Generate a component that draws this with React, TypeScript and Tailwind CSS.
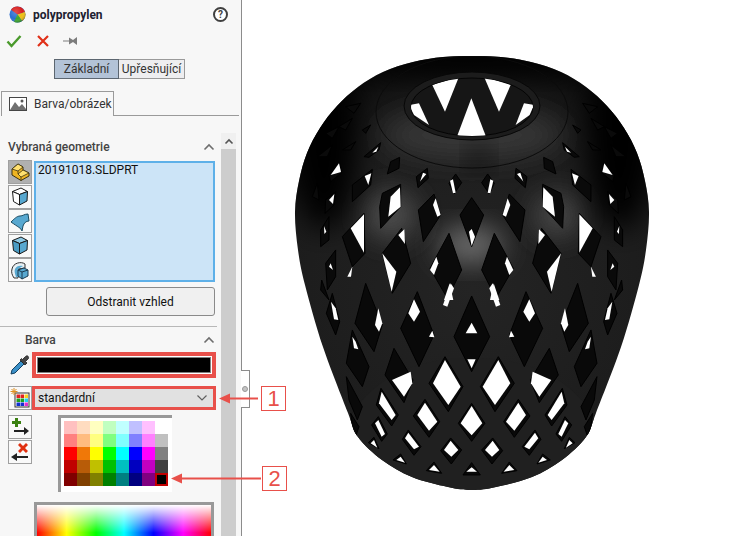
import React from "react";

const FONT = "font-['Roboto','Noto_Sans',sans-serif]";

const PALETTE = [
  ["#ffc0c0", "#ffdcc0", "#ffffc0", "#c0ffc0", "#c0ffff", "#c0c0ff", "#ffc0ff", "#ffffff"],
  ["#ff8080", "#ffbc80", "#ffff80", "#80ff80", "#80ffff", "#8080ff", "#ff80ff", "#c0c0c0"],
  ["#ff0000", "#f07808", "#ffff00", "#00ff00", "#00ffff", "#0000ff", "#ff00ff", "#808080"],
  ["#c00000", "#b85c08", "#c0c000", "#00c000", "#00c0c0", "#0000c0", "#c000c0", "#404040"],
  ["#800000", "#804000", "#808000", "#008000", "#008080", "#000080", "#800080", "#000000"],
];

function Chevron({ className = "" }: { className?: string }) {
  return (
    <svg width="12" height="8" viewBox="0 0 12 8" className={className}>
      <path d="M1.5 6.5 L6 2 L10.5 6.5" fill="none" stroke="#6e6e6e" strokeWidth="1.6" />
    </svg>
  );
}

function Ball() {
  return (
    <svg width="17" height="17" viewBox="0 0 17 17">
      <defs>
        <radialGradient id="ballShade" cx="0.4" cy="0.35" r="0.7">
          <stop offset="0" stopColor="#fff" stopOpacity="0.22" />
          <stop offset="0.6" stopColor="#fff" stopOpacity="0" />
          <stop offset="1" stopColor="#000" stopOpacity="0.35" />
        </radialGradient>
      </defs>
      <circle cx="8.5" cy="8.5" r="8" fill="#2a6fd0" />
      <path d="M8.5 8.5 L2 3.8 A8 8 0 0 1 16 6 Z" fill="#d81e1c" />
      <path d="M8.5 8.5 L16 6 A8 8 0 0 1 13 15 Z" fill="#f0c010" />
      <path d="M8.5 8.5 L13 15 A8 8 0 0 1 5 15.7 Z" fill="#3aa82c" />
      <circle cx="8.5" cy="8.5" r="8" fill="url(#ballShade)" />
    </svg>
  );
}

function SmallIconBtn({ selected, children }: { selected?: boolean; children: React.ReactNode }) {
  return (
    <div
      className={`w-[24px] h-[24px] border border-[#a0a0a0] flex items-center justify-center ${
        selected ? "bg-[#b0b0b0] border-[#808080]" : "bg-[#f9f9f9]"
      }`}
    >
      {children}
    </div>
  );
}

function CubeIcon({ top, left, right }: { top: string; left: string; right: string }) {
  return (
    <svg width="18" height="21" viewBox="0 0 18 20">
      <path d="M1.5 5 L10 1.5 L16.5 5 L8.5 8 Z" fill={top} stroke="#1a1a1a" strokeWidth="1" />
      <path d="M1.5 5 L8.5 8 L8.5 18.5 L2.5 15 Z" fill={left} stroke="#1a1a1a" strokeWidth="1" />
      <path d="M8.5 8 L16.5 5 L16 14.5 L8.5 18.5 Z" fill={right} stroke="#1a1a1a" strokeWidth="1" />
    </svg>
  );
}

/* Right half of the vase silhouette in page coordinates, mirrored about x=473 */
const RIGHT: [number, number][] = [
  [473, 56], [502, 57], [532, 62], [562, 72], [587, 87], [608, 106], [625, 128], [638, 153], [646, 181], [650, 212], [647, 250],
  [640, 285], [622, 347], [597, 413], [587, 437], [563, 460], [533, 477], [497, 487], [473, 490],
];
const ALL: [number, number][] = [...RIGHT, ...RIGHT.slice(0, -1).reverse().map(([x, y]) => [946 - x, y] as [number, number])];
function smooth(pts: [number, number][]) {
  const n = pts.length - 1; // closed: first === last
  let d = `M${pts[0][0]} ${pts[0][1]}`;
  for (let i = 0; i < n; i++) {
    const p0 = pts[(i - 1 + n) % n];
    const p1 = pts[i];
    const p2 = pts[i + 1];
    const p3 = pts[(i + 2) % n];
    const c1x = p1[0] + (p2[0] - p0[0]) / 6;
    const c1y = p1[1] + (p2[1] - p0[1]) / 6;
    const c2x = p2[0] - (p3[0] - p1[0]) / 6;
    const c2y = p2[1] - (p3[1] - p1[1]) / 6;
    d += ` C${c1x.toFixed(1)} ${c1y.toFixed(1)} ${c2x.toFixed(1)} ${c2y.toFixed(1)} ${p2[0]} ${p2[1]}`;
  }
  return d + " Z";
}
const OUTLINE = smooth(ALL);

const WHITE_L: string[] = [
  "160,308 178,290 172,305",
  "303,395 312,368 322,372 305,392",
  "393,392 402,388 410,428 402,430",
  "208,500 215,440 243,412 245,470",
  "342,465 350,445 365,495 355,500",
  "137,378 157,370 148,405",
  "35,375 60,340 66,366",
  "333,660 352,620 358,640 345,675",
  "190,610 232,665 218,725",
  "238,555 256,538 258,582",
  "95,535 135,493 135,608",
  "375,750 392,700 403,750",
  "15,528 22,545 16,552",
  "35,640 42,660 30,650",
  "85,680 100,650 96,680",
  "30,450 46,432 42,462",
];

const DARK_L: string[] = [
  "135,320 185,278 180,300 150,322",
  "205,372 215,335 242,322 240,355",
  "292,380 325,355 328,385 297,413",
  "390,400 410,372 428,398 405,432",
  "182,470 190,430 245,403 245,470 185,535",
  "298,480 345,432 365,495 313,575",
  "100,405 160,358 155,405 100,455",
  "333,655 390,550 428,660 385,745",
  "190,610 248,535 275,640 220,730",
  "70,560 135,490 138,610 100,650",
  "30,375 62,340 68,368 35,395",
  "20,450 50,425 45,465 18,490",
  "5,540 30,500 30,570 5,590",
  "20,640 50,600 50,680 25,720",
  "130,240 155,225 140,250",
  "70,300 110,275 95,300",
  "80,170 125,160 105,190",
  "20,250 60,230 40,265",
  "60,230 100,205 80,240",
  "-5,320 40,285 25,320",
  "-20,440 -5,400 0,450",
];

const WHITE_LOW: string[] = [
  "372,75 395,10 405,25 385,80",
  "268,100 285,58 303,95 285,125",
  "330,170 340,152 346,172",
  "168,135 178,85 190,130 180,155",
  "342,310 378,240 425,320 388,375",
  "219,300 275,275 280,310 255,350",
  "295,405 318,368 355,425 330,452",
  "180,370 188,335 230,405 218,420",
  "258,475 268,458 300,500 285,508",
  "375,510 395,482 418,510 397,530",
  "168,430 178,420 198,462 188,470",
  "232,540 245,530 258,548",
  "330,570 345,555 362,575",
  "155,490 165,480 175,503",
  "36,65 50,85 58,120 45,118",
  "100,170 110,185 118,208 105,205",
];

const DARK_LOW: string[] = [
  "245,145 295,35 345,165 300,260",
  "108,130 140,10 190,135 165,215",
  "198,285 225,205 282,300 255,368",
  "330,310 378,230 432,320 388,395",
  "283,408 318,358 362,425 330,472",
  "172,375 186,325 238,405 218,438",
  "250,478 268,450 306,500 285,526",
  "365,512 395,474 428,510 397,552",
  "158,435 178,410 205,462 188,484",
  "222,540 245,522 262,552",
  "322,572 345,546 368,580",
  "148,488 165,472 180,506",
  "82,250 100,150 150,260 130,320",
  "22,100 40,40 62,125 50,165",
  "82,290 130,380 115,420 90,360",
  "30,60 8,0 5,30",
  "95,400 120,440 110,470 100,440",
];

const RING_WHITE = [
  "340,105 420,80 378,185",
  "495,80 575,105 540,185",
  "457,145 503,265 412,265",
  "300,160 330,225 285,195 270,165",
  "615,160 645,165 632,195 590,225",
];

function Vase() {
  return (
    <svg viewBox="243 0 507 536" width="507" height="536" className="block">
      <defs>
        <radialGradient id="vaseBody" gradientUnits="userSpaceOnUse" cx="473" cy="290" r="235">
          <stop offset="0" stopColor="#242424" />
          <stop offset="0.8" stopColor="#1c1c1c" />
          <stop offset="1" stopColor="#0c0c0c" />
        </radialGradient>
        <filter id="soft" x="-50%" y="-50%" width="200%" height="200%">
          <feGaussianBlur stdDeviation="14" />
        </filter>
        <clipPath id="vaseClip">
          <path d={OUTLINE} />
        </clipPath>
        <clipPath id="holeClip">
          <ellipse cx="473" cy="107" rx="61" ry="29" />
        </clipPath>
      </defs>
      <path d={OUTLINE} fill="url(#vaseBody)" />
      <g clipPath="url(#vaseClip)">
        <path d="M340 440 C365 375 420 358 473 358 C526 358 581 375 606 440 L600 500 L345 500 Z" fill="#202020" />
        <ellipse cx="472" cy="245" rx="32" ry="18" fill="#6e6e6e" filter="url(#soft)" />
        <ellipse cx="392" cy="215" rx="26" ry="24" fill="#505050" filter="url(#soft)" />
        <ellipse cx="558" cy="215" rx="24" ry="22" fill="#484848" filter="url(#soft)" />
        <ellipse cx="473" cy="135" rx="90" ry="24" fill="#383838" filter="url(#soft)" />
        <ellipse cx="325" cy="140" rx="34" ry="90" fill="#000" filter="url(#soft)" />
        <ellipse cx="621" cy="140" rx="34" ry="90" fill="#000" filter="url(#soft)" />
        <ellipse cx="473" cy="60" rx="130" ry="16" fill="#000" filter="url(#soft)" />
        <ellipse cx="473" cy="112" rx="96" ry="56" fill="none" stroke="#0c0c0c" strokeWidth="1" />
        <ellipse cx="480" cy="158" rx="10" ry="10" fill="#111" filter="url(#soft)" />

        {[0, 1].map((m) => (
          <g
            key={m}
            transform={
              m === 0
                ? "translate(320 50) scale(0.3333)"
                : "translate(320 50) scale(0.3333) translate(916 0) scale(-1 1)"
            }
          >
            {DARK_L.map((p) => (
              <polygon key={p} points={p} fill="#0a0a0a" stroke="#000" strokeWidth="3" />
            ))}
            {WHITE_L.map((p) => (
              <polygon key={p} points={p} fill="#fff" />
            ))}
          </g>
        ))}
        <g transform="translate(320 50) scale(0.3333)">
          <polygon points="423,495 458,443 494,495 458,590" fill="#0a0a0a" stroke="#000" strokeWidth="3" />
          <polygon points="450,545 458,537 468,560 458,588" fill="#fff" />
        </g>

        {[0, 1].map((m) => (
          <g
            key={m}
            transform={
              m === 0
                ? "translate(320 280) scale(0.3333)"
                : "translate(320 280) scale(0.3333) translate(916 0) scale(-1 1)"
            }
          >
            {DARK_LOW.map((p) => (
              <polygon key={p} points={p} fill="#090909" stroke="#000" strokeWidth="3" />
            ))}
            {WHITE_LOW.map((p) => (
              <polygon key={p} points={p} fill="#fff" />
            ))}
          </g>
        ))}
        <g transform="translate(320 280) scale(0.3333)">
          <polygon points="405,170 458,48 512,170 458,275" fill="#090909" stroke="#000" strokeWidth="3" />
          <polygon points="440,160 458,128 475,160" fill="#fff" />
          <polygon points="445,238 470,238 458,265" fill="#fff" />
          <polygon points="418,430 458,370 498,430 458,484" fill="#090909" stroke="#000" strokeWidth="3" />
          <polygon points="425,430 458,378 490,430 458,466" fill="#fff" />
          <polygon points="432,585 458,548 484,585" fill="#090909" stroke="#000" strokeWidth="3" />
          <polygon points="442,575 458,562 474,575" fill="#fff" />
        </g>

        <ellipse cx="473" cy="106" rx="68" ry="34" fill="#1c1c1c" stroke="#080808" strokeWidth="1" />
        <ellipse cx="473" cy="107" rx="61" ry="29" fill="#161616" stroke="#050505" strokeWidth="1" />
        <g clipPath="url(#holeClip)">
          <g transform="translate(320 50) scale(0.3333)">
            {RING_WHITE.map((p) => (
              <polygon key={p} points={p} fill="#fff" />
            ))}
          </g>
        </g>
      </g>
    </svg>
  );
}

export default function App() {
  return (
    <div className={`relative w-[750px] h-[536px] overflow-hidden bg-white flex text-[#1a1a1a] ${FONT}`}>
      {/* Property manager */}
      <div className="w-[242px] h-[536px] shrink-0 bg-[#f7f7f7] border-r border-[#8c8c8c] flex flex-col overflow-hidden">
        <div className="h-[29px] flex items-center pl-[9px] pr-[13px]">
          <Ball />
          <span className="ml-[7px] text-[12px] font-bold text-[#202030]">polypropylen</span>
          <span className="ml-auto w-[15px] h-[15px] rounded-full border-2 border-[#404040] text-[#404040] bg-white text-[10px] font-bold flex items-center justify-center leading-none">
            ?
          </span>
        </div>

        <div className="h-[24px] flex items-center pl-[6px] gap-[12px]">
          <svg width="16" height="14" viewBox="0 0 16 14">
            <path d="M1.5 7.5 L5.5 12 L14.5 2" fill="none" stroke="#4a9a2c" strokeWidth="2.4" />
          </svg>
          <svg width="14" height="14" viewBox="0 0 14 14" className="ml-[2px]">
            <path d="M2 2 L12 12 M12 2 L2 12" fill="none" stroke="#e03018" strokeWidth="2.2" />
          </svg>
          <svg width="15" height="10" viewBox="0 0 15 10" className="ml-[1px]">
            <path d="M0 5 H7" stroke="#a0a0a0" strokeWidth="1.4" />
            <path d="M6 1.5 L10 4 L14 1 V9 L10 6 L6 8.5 Z" fill="#7c7c7c" />
          </svg>
        </div>

        <div className="mt-[6px] ml-[54px] flex text-[12px] h-[20px]">
          <div className="w-[65px] bg-[#b3c3d7] border border-[#5c6670] flex items-center justify-center text-[#333]">
            Základní
          </div>
          <div className="w-[66px] bg-[#eeeef0] border border-l-0 border-[#9a9a9a] flex items-center justify-center text-[#333]">
            Upřesňující
          </div>
        </div>

        <div className="mt-[12px] h-[25px] flex items-end">
          <div className="ml-[1px] w-[113px] h-[25px] border border-b-0 border-[#9a9a9a] bg-[#f7f7f7] flex items-center pl-[7px] gap-[7px] text-[12px] text-[#333]">
            <svg width="18" height="14" viewBox="0 0 18 14" className="shrink-0">
              <rect x="0.5" y="0.5" width="17" height="13" fill="#fff" stroke="#444" />
              <path d="M1 13 L6 5 L10 10 L13 7 L17 12 V13 Z" fill="#707070" />
              <circle cx="13" cy="4" r="1.5" fill="#555" />
            </svg>
            Barva/obrázek
          </div>
          <div className="flex-1 border-b border-[#9a9a9a] mr-[2px]" />
        </div>

        <div className="mt-[17px] flex flex-1 min-h-0">
          <div className="w-[221px] shrink-0">
            <div className="h-[27px] flex items-center justify-between pl-[8px] pr-[6px]">
              <span className="text-[12px] font-medium text-[#444]">Vybraná geometrie</span>
              <Chevron />
            </div>
            <div className="flex ml-[8px] h-[122px]">
              <div className="w-[24px] flex flex-col gap-[0.5px]">
                <SmallIconBtn selected>
                  <svg width="20" height="18" viewBox="0 0 20 18">
                    <path d="M2 6 L8 1 L13 4 L13 7 L19 10 L19 13 L11 17.5 L2 12 Z" fill="#eeb422" stroke="#3a3010" strokeWidth="1" />
                    <path d="M2 6 L8 1 L13 4 L8 8 Z M8 11 L13 7 L19 10 L11 14 Z" fill="#ffe070" stroke="#3a3010" strokeWidth="0.8" />
                    <path d="M11 14 V17.5 M8 8 V11" fill="none" stroke="#3a3010" strokeWidth="0.8" />
                  </svg>
                </SmallIconBtn>
                <SmallIconBtn>
                  <CubeIcon top="#ffffff" left="#ffffff" right="#58a8d0" />
                </SmallIconBtn>
                <SmallIconBtn>
                  <svg width="20" height="21" viewBox="0 0 20 21">
                    <path d="M1 11 C4 8 7 5 10 5 C13 5 14 3 18 3 L19 10 C16 10 14 12 13 15 L12 20 C11 17 8 16 1 11 Z" fill="#58a8d0" stroke="#1a4a60" strokeWidth="1" />
                  </svg>
                </SmallIconBtn>
                <SmallIconBtn>
                  <CubeIcon top="#8cc8e4" left="#4a9cc4" right="#58a8d0" />
                </SmallIconBtn>
                <SmallIconBtn>
                  <svg width="20" height="21" viewBox="0 0 20 21">
                    <path d="M2 9 C3 3 11 1 15 4 L15 8 L8 9 L8 18 L4 18 C2 15 1 12 2 9 Z" fill="#e8f0f4" stroke="#333" strokeWidth="1" />
                    <path d="M5 9 C6 6 10 5 13 6 L8 9 L8 17 L6 17 C5 14 4 11 5 9 Z" fill="#58a8d0" />
                    <path d="M8 10 L14 8 L18 10 L18 16 L12 19 L8 16 Z" fill="#58a8d0" stroke="#1a3a50" strokeWidth="1" />
                    <path d="M8 10 L12 12 L12 19 M12 12 L18 10" fill="none" stroke="#1a3a50" strokeWidth="1" />
                  </svg>
                </SmallIconBtn>
              </div>
              <div className="ml-[2px] w-[181px] h-[121px] mt-[1px] bg-[#cce4f7] border-2 border-[#5eb0e8] text-[12px] leading-[14px] px-[2px] text-[#111]">
                20191018.SLDPRT
              </div>
            </div>
            <div className="mt-[5px] ml-[46px] w-[169px] h-[29px] bg-[#f0f0f0] border border-[#8a8a8a] rounded-[3px] flex items-center justify-center text-[12px] text-[#111]">
              Odstranit vzhled
            </div>
            <div className="mt-[10px] mr-[4px] border-t border-[#b8b8b8]" />
            <div className="h-[25px] flex items-center justify-between pl-[25px] pr-[6px]">
              <span className="text-[12px] font-medium text-[#444]">Barva</span>
              <Chevron />
            </div>
            <div className="flex items-center h-[26px] pl-[10px]">
              <svg width="20" height="20" viewBox="0 0 20 20" className="shrink-0">
                <path d="M1 19 L2 15 L11 6 L14 9 L5 18 Z" fill="#3a90c8" stroke="#144060" strokeWidth="1" />
                <path d="M10 5 L15 10 L17 8 L15.5 6.5 L18.5 3.5 C19 1 17 0 15.5 1.5 L12.5 4.5 L11.5 3.5 Z" fill="#444" stroke="#222" strokeWidth="0.8" />
              </svg>
              <div className="ml-[2px] w-[184px] h-[26px] border-[4px] border-[#e8504a] p-[1px] bg-white">
                <div className="w-full h-full bg-black border border-[#808080]" />
              </div>
            </div>
            <div className="mt-[8px] flex ml-[8px]">
              <SmallIconBtn>
                <svg width="20" height="20" viewBox="0 0 20 20">
                  <rect x="5" y="5" width="14" height="14" fill="#fff" stroke="#333" />
                  <rect x="6.5" y="6.5" width="3.5" height="3.5" fill="#e02020" />
                  <rect x="10.5" y="6.5" width="3.5" height="3.5" fill="#e02020" />
                  <rect x="14.5" y="6.5" width="3.5" height="3.5" fill="#f8d020" />
                  <rect x="6.5" y="10.5" width="3.5" height="3.5" fill="#20a020" />
                  <rect x="10.5" y="10.5" width="3.5" height="3.5" fill="#20a020" />
                  <rect x="14.5" y="10.5" width="3.5" height="3.5" fill="#20d0f0" />
                  <rect x="6.5" y="14.5" width="3.5" height="3.5" fill="#1030d0" />
                  <rect x="10.5" y="14.5" width="3.5" height="3.5" fill="#1030d0" />
                  <rect x="14.5" y="14.5" width="3.5" height="3.5" fill="#e030d0" />
                  <path d="M4 0 V7 M0.5 3.5 H7.5 M1.5 1 L6.5 6 M6.5 1 L1.5 6" stroke="#e09020" strokeWidth="1" />
                </svg>
              </SmallIconBtn>
              <div className="w-[184px] h-[24px] border-[3px] border-[#e8504a] bg-[#e1e1e1] flex items-center justify-between pl-[3px] pr-[5px] text-[12px] text-[#111]">
                standardní
                <svg width="12" height="8" viewBox="0 0 12 8">
                  <path d="M1.5 1.5 L6 6 L10.5 1.5" fill="none" stroke="#606060" strokeWidth="1.2" />
                </svg>
              </div>
            </div>
            <div className="mt-[5px] flex ml-[8px]">
              <div className="flex flex-col gap-[1px]">
                <SmallIconBtn>
                  <svg width="20" height="20" viewBox="0 0 20 20">
                    <path d="M5 1 H8 V4 H11 V7 H8 V10 H5 V7 H2 V4 H5 Z" fill="#3a8010" />
                    <path d="M4 14 H16" stroke="#222" strokeWidth="2" />
                    <path d="M14 10 L19 14 L14 18 Z" fill="#222" />
                  </svg>
                </SmallIconBtn>
                <SmallIconBtn>
                  <svg width="20" height="20" viewBox="0 0 20 20">
                    <path d="M8 3 L10 1 L13 4 L16 1 L18 3 L15 6 L18 9 L16 11 L13 8 L10 11 L8 9 L11 6 Z" fill="#e03010" />
                    <path d="M5 15 H18" stroke="#222" strokeWidth="2" />
                    <path d="M7 11 L1 15 L7 19 Z" fill="#222" />
                  </svg>
                </SmallIconBtn>
              </div>
              <div className="ml-[26px] w-[114px] h-[77px] bg-white border-t-[3px] border-l-[3px] border-[#999999] p-[3px] pr-[4px] pb-[5px] shrink-0">
                <div className="grid grid-cols-[repeat(8,13px)] grid-rows-[repeat(5,13px)]">
                  {PALETTE.flat().map((c, i) =>
                    i === 39 ? (
                      <div key={i} className="border-[2px] border-[#c00000] bg-black" />
                    ) : (
                      <div key={i} style={{ backgroundColor: c }} />
                    ),
                  )}
                </div>
              </div>
            </div>
            <div className="mt-[10px] ml-[34px] w-[180px] h-[40px] border-t-[3px] border-x-[3px] border-[#999999] bg-white">
              <div className="w-full h-full bg-[linear-gradient(to_bottom,rgba(255,255,255,1),rgba(255,255,255,0)_75%),linear-gradient(to_right,#ff0000,#ffff00_17%,#00ff00_34%,#00ffff_50%,#0000ff_67%,#ff00ff_84%,#ff0000)]" />
            </div>
          </div>

          <div className="w-[15px] shrink-0 bg-[#cdcdcd] flex flex-col">
            <div className="h-[16px] bg-[#f0f0f0] flex items-center justify-center">
              <svg width="10" height="7" viewBox="0 0 10 7">
                <path d="M1.5 5.5 L5 2 L8.5 5.5" fill="none" stroke="#555" strokeWidth="1.6" />
              </svg>
            </div>
          </div>
        </div>
      </div>

      {/* Graphics area */}
      <div className="flex-1 min-w-0">
        <Vase />
      </div>

      {/* Panel splitter notch */}
      <div className="absolute left-[241px] top-[370px] w-[9px] h-[38px] bg-white border border-l-0 border-[#8c8c8c] flex items-center justify-center">
        <span className="w-[6px] h-[6px] rounded-full bg-[#c4c4c4] border border-[#999999] mr-[1px]" />
      </div>

      {/* Callouts */}
      <svg className="absolute left-0 top-0 pointer-events-none" width="750" height="536" viewBox="0 0 750 536">
        <path d="M228 398.5 H258" stroke="#e8504a" strokeWidth="2" />
        <path d="M219 398.5 L230 393.5 V403.5 Z" fill="#e8504a" />
        <path d="M180 478.5 H261" stroke="#e8504a" strokeWidth="2" />
        <path d="M171 478.5 L182 473.5 V483.5 Z" fill="#e8504a" />
      </svg>
      <div className="absolute left-[261px] top-[386px] w-[25px] h-[25px] bg-white border border-[#e8504a] text-[#e8504a] text-[22px] leading-none flex items-center justify-center font-['Liberation_Sans',sans-serif]">
        1
      </div>
      <div className="absolute left-[262px] top-[466px] w-[25px] h-[25px] bg-white border border-[#e8504a] text-[#e8504a] text-[22px] leading-none flex items-center justify-center font-['Liberation_Sans',sans-serif]">
        2
      </div>
    </div>
  );
}
